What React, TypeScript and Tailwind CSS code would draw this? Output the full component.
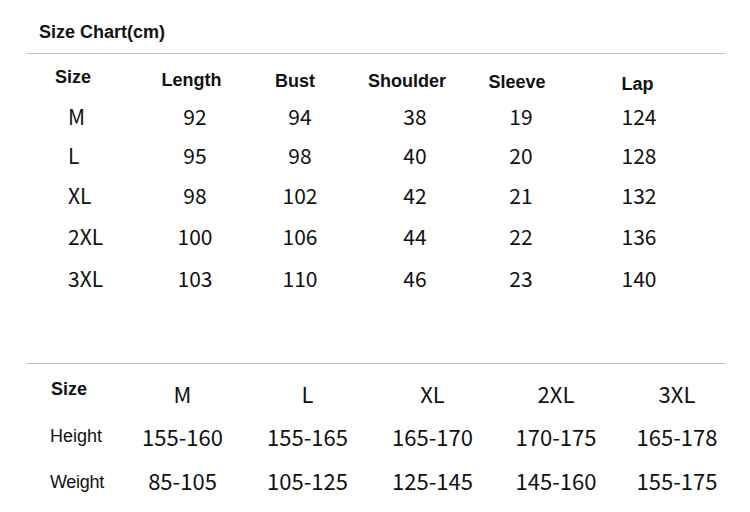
const sans = "font-['Liberation_Sans',Arial,sans-serif]";
const cjk = "font-['Noto_Sans_CJK_SC','Noto_Sans',sans-serif]";

// top chart columns: header text, width, header nudge
const topCols = [
  { label: "Length", w: "w-[110px]", head: "pr-[7px] mt-[3px]" },
  { label: "Bust", w: "w-[100px]", head: "pr-[10px] mt-[4px]" },
  { label: "Shoulder", w: "w-[130px]", head: "pr-[16px] mt-[4px]" },
  { label: "Sleeve", w: "w-[82px]", head: "pr-[8px] mt-[5px]" },
  { label: "Lap", w: "w-[154px]", head: "pr-[3px] mt-[7px]" },
];

const topRows = [
  { size: "M", vals: ["92", "94", "38", "19", "124"], h: "h-[39px]" },
  { size: "L", vals: ["95", "98", "40", "20", "128"], h: "h-[39px]" },
  { size: "XL", vals: ["98", "102", "42", "21", "132"], h: "h-[41px]" },
  { size: "2XL", vals: ["100", "106", "44", "22", "136"], h: "h-[42px]" },
  { size: "3XL", vals: ["103", "110", "46", "23", "140"], h: "h-[42px]" },
];

const bottomWidths = ["w-[125px]", "w-[125px]", "w-[125px]", "w-[122px]", "w-[120px]"];
const sizes = ["M", "L", "XL", "2XL", "3XL"];
const heights = ["155-160", "155-165", "165-170", "170-175", "165-178"];
const weights = ["85-105", "105-125", "125-145", "145-160", "155-175"];

export default function App() {
  return (
    <div className="w-[750px] h-[512px] bg-white text-[#111] overflow-hidden">
      {/* Title */}
      <div className={`${sans} font-bold text-[18px] leading-[20px] pt-[22px] pl-[39px]`}>
        Size Chart(cm)
      </div>

      <div className="mt-[11px] ml-[27px] w-[698px] h-px bg-[#bdbdbd]" />

      {/* Top chart header */}
      <div className={`${sans} font-bold text-[18px] leading-[20px] flex items-start h-[30px] mt-[13px]`}>
        <div className="w-[140px] pl-[55px]">Size</div>
        {topCols.map((c) => (
          <div key={c.label} className={`${c.w} ${c.head} text-center`}>
            {c.label}
          </div>
        ))}
      </div>

      {/* Top chart rows */}
      {topRows.map((r) => (
        <div key={r.size} className={`${cjk} text-[21px] flex items-center ${r.h}`}>
          <div className="w-[140px] pl-[68px]">{r.size}</div>
          {r.vals.map((v, i) => (
            <div key={i} className={`${topCols[i].w} text-center`}>
              {v}
            </div>
          ))}
        </div>
      ))}

      <div className="mt-[63px] ml-[27px] w-[698px] h-px bg-[#bdbdbd]" />

      {/* Bottom chart */}
      <div className="flex items-start mt-[7px]">
        <div className={`${sans} font-bold text-[18px] leading-[20px] w-[120px] pl-[51px] mt-[8px]`}>
          Size
        </div>
        {sizes.map((s, i) => (
          <div key={s} className={`${cjk} ${bottomWidths[i]} text-[22px] leading-[30px] mt-[7px] text-center`}>
            {s}
          </div>
        ))}
      </div>

      <div className="flex items-center h-[44px] mt-[6px]">
        <div className={`${sans} text-[18px] w-[120px] pl-[50px]`}>Height</div>
        {heights.map((v, i) => (
          <div key={v} className={`${cjk} ${bottomWidths[i]} text-[22px] text-center`}>
            {v}
          </div>
        ))}
      </div>

      <div className="flex items-center h-[42px] mt-[3px]">
        <div className={`${sans} text-[18px] w-[120px] pl-[50px] tracking-[-0.3px]`}>Weight</div>
        {weights.map((v, i) => (
          <div key={v} className={`${cjk} ${bottomWidths[i]} text-[22px] text-center mb-[3px]`}>
            {v}
          </div>
        ))}
      </div>
    </div>
  );
}
